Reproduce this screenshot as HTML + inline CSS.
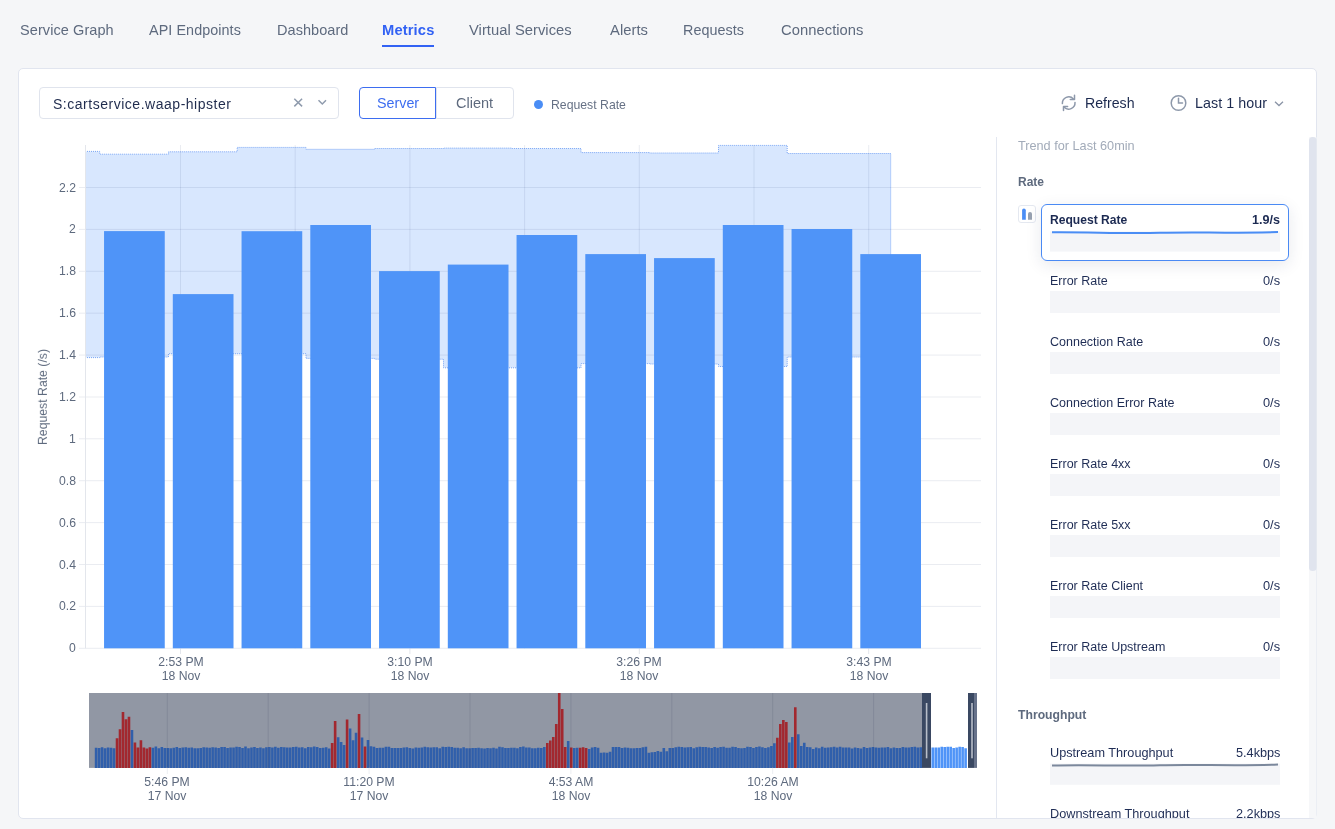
<!DOCTYPE html>
<html><head><meta charset="utf-8"><style>
html,body{margin:0;padding:0}
body{width:1335px;height:829px;overflow:hidden;position:relative;background:#f5f6f8;font-family:"Liberation Sans", sans-serif}
.t{position:absolute;white-space:nowrap;line-height:1;will-change:transform}
.abs{position:absolute;box-sizing:border-box}
svg{position:absolute;left:0;top:0}
</style></head><body>
<div class="t" style="left:19.7px;top:22.83px;font-size:14.5px;color:#5e6a7e;font-weight:400;letter-spacing:0.08px;">Service Graph</div>
<div class="t" style="left:149.4px;top:22.95px;font-size:14.35px;color:#5e6a7e;font-weight:400;letter-spacing:0.08px;">API Endpoints</div>
<div class="t" style="left:276.6px;top:22.83px;font-size:14.5px;color:#5e6a7e;font-weight:400;letter-spacing:0.05px;">Dashboard</div>
<div class="t" style="left:469.4px;top:22.61px;font-size:14.75px;color:#5e6a7e;font-weight:400;letter-spacing:0.03px;">Virtual Services</div>
<div class="t" style="left:609.6px;top:22.61px;font-size:14.75px;color:#5e6a7e;font-weight:400;letter-spacing:0.05px;">Alerts</div>
<div class="t" style="left:683.4px;top:22.95px;font-size:14.35px;color:#5e6a7e;font-weight:400;letter-spacing:0.05px;">Requests</div>
<div class="t" style="left:780.5px;top:22.61px;font-size:14.75px;color:#5e6a7e;font-weight:400;letter-spacing:0.05px;">Connections</div>
<div class="t" style="left:382.0px;top:22.66px;font-size:14.7px;color:#3262f4;font-weight:700;letter-spacing:0.15px;">Metrics</div>
<div class="abs" style="left:382px;top:45px;width:52px;height:2px;background:#3262f4"></div>
<div class="abs" style="left:18px;top:68px;width:1299px;height:751px;background:#fff;border:1px solid #e1e5ef;border-radius:5px"></div>
<div class="abs" style="left:39px;top:87px;width:300px;height:32px;border:1px solid #e0e4ed;border-radius:4px;background:#fff"></div>
<div class="t" style="left:52.5px;top:97.15px;font-size:14px;color:#1f2b4d;font-weight:400;letter-spacing:0.52px;">S:cartservice.waap-hipster</div>
<div class="abs" style="left:436px;top:87px;width:77.5px;height:32px;border:1px solid #e0e4ed;border-radius:0 4px 4px 0;background:#fff"></div>
<div class="abs" style="left:359px;top:87px;width:77px;height:32px;border:1.5px solid #3d6df0;border-radius:4px 0 0 4px;background:#fff"></div>
<div class="t" style="left:376.7px;top:96.10px;font-size:14.3px;color:#3d6df0;font-weight:400;letter-spacing:0px;">Server</div>
<div class="t" style="left:455.8px;top:95.93px;font-size:14.5px;color:#5e6a7e;font-weight:400;letter-spacing:0px;">Client</div>
<div class="abs" style="left:534px;top:100px;width:9px;height:9px;border-radius:50%;background:#4a8df5"></div>
<div class="t" style="left:551px;top:98.93px;font-size:12.25px;color:#667185;font-weight:400;letter-spacing:0px;">Request Rate</div>
<div class="t" style="left:1084.9px;top:96.42px;font-size:14.15px;color:#1c2a4f;font-weight:400;letter-spacing:0px;">Refresh</div>
<div class="t" style="left:1194.6px;top:96.30px;font-size:14.3px;color:#1c2a4f;font-weight:400;letter-spacing:0.06px;">Last 1 hour</div>
<svg width="1335" height="829" viewBox="0 0 1335 829">
<path d="M294.3 98.8 L302.1 106.4 M302.1 98.8 L294.3 106.4" stroke="#8f9bad" stroke-width="1.5" fill="none"/>
<path d="M318.5 100.3 L322.3 104 L326 100.3" stroke="#8f9bad" stroke-width="1.5" fill="none"/>
<g stroke="#8d98aa" stroke-width="1.5" fill="none" stroke-linecap="round" stroke-linejoin="round"><path d="M1062.4 103.6 A6.3 6.3 0 0 1 1073.4 99"/><path d="M1074.5 95.3 V99.5 H1070.3"/><path d="M1075 102.4 A6.3 6.3 0 0 1 1064 107"/><path d="M1063.5 110.6 V106.4 H1067.6"/></g>
<g stroke="#8d98aa" stroke-width="1.5" fill="none" stroke-linecap="round"><circle cx="1178.5" cy="103" r="7.3"/><path d="M1178.5 98.3 L1178.5 103 L1182.5 103"/></g>
<path d="M1275 101.8 L1279 105.5 L1283 101.8" stroke="#8a94a6" stroke-width="1.3" fill="none"/>
<path d="M85 151.4 L85 151.4 L99.7 151.4 L99.7 154.2 L168.5 154.2 L168.5 151.8 L237.2 151.8 L237.2 147.4 L306 147.4 L306 149.3 L374.7 149.3 L374.7 148.5 L443.5 148.5 L443.5 148.1 L512.2 148.1 L512.2 148.5 L581 148.5 L581 152.6 L649.7 152.6 L649.7 153 L718.5 153 L718.5 145.4 L787.2 145.4 L787.2 153.5 L890.7 153.5 L890.7 357 L787.2 357 L787.2 366.5 L718.5 366.5 L718.5 364 L649.7 364 L649.7 363.6 L581 363.6 L581 367.8 L512.2 367.8 L512.2 367.8 L443.5 367.8 L443.5 359.2 L374.7 359.2 L374.7 358.4 L306 358.4 L306 353.7 L237.2 353.7 L237.2 353.7 L168.5 353.7 L168.5 357 L99.7 357 L99.7 357.6 L85 357.6Z" fill="#d8e7fe"/>
<path d="M85 151.4 L85 151.4 L99.7 151.4 L99.7 154.2 L168.5 154.2 L168.5 151.8 L237.2 151.8 L237.2 147.4 L306 147.4 L306 149.3 L374.7 149.3 L374.7 148.5 L443.5 148.5 L443.5 148.1 L512.2 148.1 L512.2 148.5 L581 148.5 L581 152.6 L649.7 152.6 L649.7 153 L718.5 153 L718.5 145.4 L787.2 145.4 L787.2 153.5 L890.7 153.5 L890.7 357" fill="none" stroke="#7aa6f5" stroke-width="1" stroke-dasharray="1 1"/>
<path d="M85 357.6 L85 357.6 L99.7 357.6 L99.7 357 L168.5 357 L168.5 353.7 L237.2 353.7 L237.2 353.7 L306 353.7 L306 358.4 L374.7 358.4 L374.7 359.2 L443.5 359.2 L443.5 367.8 L512.2 367.8 L512.2 367.8 L581 367.8 L581 363.6 L649.7 363.6 L649.7 364 L718.5 364 L718.5 366.5 L787.2 366.5 L787.2 357 L890.7 357" fill="none" stroke="#7aa6f5" stroke-width="1" stroke-dasharray="1 1"/>
<path d="M79 648.3 L981 648.3 M79 606.4 L981 606.4 M79 564.5 L981 564.5 M79 522.6 L981 522.6 M79 480.7 L981 480.7 M79 438.8 L981 438.8 M79 397.0 L981 397.0 M79 355.1 L981 355.1 M79 313.2 L981 313.2 M79 271.3 L981 271.3 M79 229.4 L981 229.4 M79 187.5 L981 187.5 M180.5 145 L180.5 648.3 M295.2 145 L295.2 648.3 M409.9 145 L409.9 648.3 M524.6 145 L524.6 648.3 M639.3 145 L639.3 648.3 M754.0 145 L754.0 648.3 M868.7 145 L868.7 648.3" stroke="rgba(20,40,100,0.09)" stroke-width="1" fill="none"/>
<path d="M85.5 145 L85.5 648.3" stroke="#e3e6ec" stroke-width="1"/>
<path d="M180.5 648.3 L180.5 654 M409.9 648.3 L409.9 654 M639.3 648.3 L639.3 654 M868.7 648.3 L868.7 654" stroke="#e3e6ec" stroke-width="1"/>
<rect x="104.05" y="231.1" width="60.7" height="417.20" fill="#4f94f8"/>
<rect x="172.80" y="294.1" width="60.7" height="354.20" fill="#4f94f8"/>
<rect x="241.55" y="231.2" width="60.7" height="417.10" fill="#4f94f8"/>
<rect x="310.30" y="225" width="60.7" height="423.30" fill="#4f94f8"/>
<rect x="379.05" y="271.1" width="60.7" height="377.20" fill="#4f94f8"/>
<rect x="447.80" y="264.6" width="60.7" height="383.70" fill="#4f94f8"/>
<rect x="516.55" y="235" width="60.7" height="413.30" fill="#4f94f8"/>
<rect x="585.30" y="254.1" width="60.7" height="394.20" fill="#4f94f8"/>
<rect x="654.05" y="258.1" width="60.7" height="390.20" fill="#4f94f8"/>
<rect x="722.80" y="225" width="60.7" height="423.30" fill="#4f94f8"/>
<rect x="791.55" y="229" width="60.7" height="419.30" fill="#4f94f8"/>
<rect x="860.30" y="254.1" width="60.7" height="394.20" fill="#4f94f8"/>
<rect x="89" y="693" width="833" height="74.89999999999998" fill="#9197a4"/>
<path d="M94.80 747.8h2.6V767.9h-2.6ZM97.79 748.1h2.6V767.9h-2.6ZM100.78 747.2h2.6V767.9h-2.6ZM103.76 748.3h2.6V767.9h-2.6ZM106.75 747.4h2.6V767.9h-2.6ZM109.74 747.7h2.6V767.9h-2.6ZM112.73 748.3h2.6V767.9h-2.6ZM130.66 730.1h2.6V767.9h-2.6ZM151.57 747.7h2.6V767.9h-2.6ZM154.56 746.6h2.6V767.9h-2.6ZM157.55 748.3h2.6V767.9h-2.6ZM160.54 746.9h2.6V767.9h-2.6ZM163.52 747.9h2.6V767.9h-2.6ZM166.51 748.1h2.6V767.9h-2.6ZM169.50 748.2h2.6V767.9h-2.6ZM172.49 747.8h2.6V767.9h-2.6ZM175.48 746.9h2.6V767.9h-2.6ZM178.46 748.1h2.6V767.9h-2.6ZM181.45 747.4h2.6V767.9h-2.6ZM184.44 747.2h2.6V767.9h-2.6ZM187.43 747.7h2.6V767.9h-2.6ZM190.42 747.4h2.6V767.9h-2.6ZM193.40 748.3h2.6V767.9h-2.6ZM196.39 748.3h2.6V767.9h-2.6ZM199.38 748.0h2.6V767.9h-2.6ZM202.37 747.2h2.6V767.9h-2.6ZM205.36 747.6h2.6V767.9h-2.6ZM208.34 747.8h2.6V767.9h-2.6ZM211.33 747.3h2.6V767.9h-2.6ZM214.32 747.6h2.6V767.9h-2.6ZM217.31 747.9h2.6V767.9h-2.6ZM220.30 747.0h2.6V767.9h-2.6ZM223.28 747.1h2.6V767.9h-2.6ZM226.27 748.0h2.6V767.9h-2.6ZM229.26 747.4h2.6V767.9h-2.6ZM232.25 747.5h2.6V767.9h-2.6ZM235.24 746.8h2.6V767.9h-2.6ZM238.22 747.1h2.6V767.9h-2.6ZM241.21 747.9h2.6V767.9h-2.6ZM244.20 746.6h2.6V767.9h-2.6ZM247.19 748.2h2.6V767.9h-2.6ZM250.18 747.6h2.6V767.9h-2.6ZM253.16 747.0h2.6V767.9h-2.6ZM256.15 748.1h2.6V767.9h-2.6ZM259.14 747.5h2.6V767.9h-2.6ZM262.13 748.3h2.6V767.9h-2.6ZM265.12 747.2h2.6V767.9h-2.6ZM268.10 747.0h2.6V767.9h-2.6ZM271.09 747.4h2.6V767.9h-2.6ZM274.08 746.8h2.6V767.9h-2.6ZM277.07 747.8h2.6V767.9h-2.6ZM280.06 747.1h2.6V767.9h-2.6ZM283.04 747.3h2.6V767.9h-2.6ZM286.03 747.4h2.6V767.9h-2.6ZM289.02 747.6h2.6V767.9h-2.6ZM292.01 746.9h2.6V767.9h-2.6ZM295.00 746.7h2.6V767.9h-2.6ZM297.98 747.5h2.6V767.9h-2.6ZM300.97 747.2h2.6V767.9h-2.6ZM303.96 748.3h2.6V767.9h-2.6ZM306.95 747.1h2.6V767.9h-2.6ZM309.94 747.2h2.6V767.9h-2.6ZM312.92 746.6h2.6V767.9h-2.6ZM315.91 746.9h2.6V767.9h-2.6ZM318.90 747.9h2.6V767.9h-2.6ZM321.89 747.7h2.6V767.9h-2.6ZM324.88 747.2h2.6V767.9h-2.6ZM327.86 748.4h2.6V767.9h-2.6ZM336.83 737.2h2.6V767.9h-2.6ZM339.82 742.1h2.6V767.9h-2.6ZM342.80 745.1h2.6V767.9h-2.6ZM348.78 728.5h2.6V767.9h-2.6ZM351.77 740.2h2.6V767.9h-2.6ZM354.76 732.7h2.6V767.9h-2.6ZM360.73 737.6h2.6V767.9h-2.6ZM366.71 739.9h2.6V767.9h-2.6ZM369.70 746.2h2.6V767.9h-2.6ZM372.68 746.8h2.6V767.9h-2.6ZM375.67 747.9h2.6V767.9h-2.6ZM378.66 747.7h2.6V767.9h-2.6ZM381.65 747.8h2.6V767.9h-2.6ZM384.64 746.8h2.6V767.9h-2.6ZM387.62 746.7h2.6V767.9h-2.6ZM390.61 748.1h2.6V767.9h-2.6ZM393.60 748.1h2.6V767.9h-2.6ZM396.59 748.0h2.6V767.9h-2.6ZM399.58 748.0h2.6V767.9h-2.6ZM402.56 747.5h2.6V767.9h-2.6ZM405.55 747.3h2.6V767.9h-2.6ZM408.54 747.9h2.6V767.9h-2.6ZM411.53 748.4h2.6V767.9h-2.6ZM414.52 747.6h2.6V767.9h-2.6ZM417.50 747.7h2.6V767.9h-2.6ZM420.49 747.4h2.6V767.9h-2.6ZM423.48 746.7h2.6V767.9h-2.6ZM426.47 747.2h2.6V767.9h-2.6ZM429.46 747.5h2.6V767.9h-2.6ZM432.44 747.3h2.6V767.9h-2.6ZM435.43 747.2h2.6V767.9h-2.6ZM438.42 748.3h2.6V767.9h-2.6ZM441.41 746.8h2.6V767.9h-2.6ZM444.40 747.0h2.6V767.9h-2.6ZM447.38 746.8h2.6V767.9h-2.6ZM450.37 747.0h2.6V767.9h-2.6ZM453.36 747.7h2.6V767.9h-2.6ZM456.35 747.7h2.6V767.9h-2.6ZM459.34 748.2h2.6V767.9h-2.6ZM462.32 747.3h2.6V767.9h-2.6ZM465.31 748.3h2.6V767.9h-2.6ZM468.30 748.3h2.6V767.9h-2.6ZM471.29 748.0h2.6V767.9h-2.6ZM474.28 748.1h2.6V767.9h-2.6ZM477.26 747.8h2.6V767.9h-2.6ZM480.25 748.3h2.6V767.9h-2.6ZM483.24 748.4h2.6V767.9h-2.6ZM486.23 748.1h2.6V767.9h-2.6ZM489.22 748.2h2.6V767.9h-2.6ZM492.20 747.7h2.6V767.9h-2.6ZM495.19 748.4h2.6V767.9h-2.6ZM498.18 746.8h2.6V767.9h-2.6ZM501.17 747.3h2.6V767.9h-2.6ZM504.16 748.1h2.6V767.9h-2.6ZM507.14 747.9h2.6V767.9h-2.6ZM510.13 747.8h2.6V767.9h-2.6ZM513.12 747.7h2.6V767.9h-2.6ZM516.11 748.2h2.6V767.9h-2.6ZM519.10 746.9h2.6V767.9h-2.6ZM522.08 746.6h2.6V767.9h-2.6ZM525.07 747.6h2.6V767.9h-2.6ZM528.06 747.5h2.6V767.9h-2.6ZM531.05 748.2h2.6V767.9h-2.6ZM534.04 748.2h2.6V767.9h-2.6ZM537.02 747.8h2.6V767.9h-2.6ZM540.01 747.9h2.6V767.9h-2.6ZM543.00 747.0h2.6V767.9h-2.6ZM566.90 741.0h2.6V767.9h-2.6ZM572.88 747.9h2.6V767.9h-2.6ZM575.87 747.7h2.6V767.9h-2.6ZM587.82 749.0h2.6V767.9h-2.6ZM590.81 747.4h2.6V767.9h-2.6ZM593.80 747.0h2.6V767.9h-2.6ZM596.78 747.8h2.6V767.9h-2.6ZM599.77 752.8h2.6V767.9h-2.6ZM602.76 752.5h2.6V767.9h-2.6ZM605.75 752.8h2.6V767.9h-2.6ZM608.74 751.7h2.6V767.9h-2.6ZM611.72 746.9h2.6V767.9h-2.6ZM614.71 746.9h2.6V767.9h-2.6ZM617.70 747.1h2.6V767.9h-2.6ZM620.69 748.0h2.6V767.9h-2.6ZM623.68 747.5h2.6V767.9h-2.6ZM626.66 747.8h2.6V767.9h-2.6ZM629.65 748.3h2.6V767.9h-2.6ZM632.64 748.3h2.6V767.9h-2.6ZM635.63 747.9h2.6V767.9h-2.6ZM638.62 747.9h2.6V767.9h-2.6ZM641.60 747.2h2.6V767.9h-2.6ZM644.59 746.7h2.6V767.9h-2.6ZM647.58 752.8h2.6V767.9h-2.6ZM650.57 752.2h2.6V767.9h-2.6ZM653.56 752.1h2.6V767.9h-2.6ZM656.54 751.0h2.6V767.9h-2.6ZM659.53 751.7h2.6V767.9h-2.6ZM662.52 748.0h2.6V767.9h-2.6ZM665.51 751.2h2.6V767.9h-2.6ZM668.50 748.0h2.6V767.9h-2.6ZM671.48 748.0h2.6V767.9h-2.6ZM674.47 747.3h2.6V767.9h-2.6ZM677.46 746.8h2.6V767.9h-2.6ZM680.45 746.9h2.6V767.9h-2.6ZM683.44 747.5h2.6V767.9h-2.6ZM686.42 747.2h2.6V767.9h-2.6ZM689.41 747.0h2.6V767.9h-2.6ZM692.40 748.2h2.6V767.9h-2.6ZM695.39 747.2h2.6V767.9h-2.6ZM698.38 746.8h2.6V767.9h-2.6ZM701.36 747.0h2.6V767.9h-2.6ZM704.35 747.0h2.6V767.9h-2.6ZM707.34 747.5h2.6V767.9h-2.6ZM710.33 748.1h2.6V767.9h-2.6ZM713.32 747.0h2.6V767.9h-2.6ZM716.30 747.8h2.6V767.9h-2.6ZM719.29 747.0h2.6V767.9h-2.6ZM722.28 746.7h2.6V767.9h-2.6ZM725.27 747.7h2.6V767.9h-2.6ZM728.26 747.7h2.6V767.9h-2.6ZM731.24 746.7h2.6V767.9h-2.6ZM734.23 747.1h2.6V767.9h-2.6ZM737.22 748.1h2.6V767.9h-2.6ZM740.21 748.2h2.6V767.9h-2.6ZM743.20 748.1h2.6V767.9h-2.6ZM746.18 746.8h2.6V767.9h-2.6ZM749.17 746.9h2.6V767.9h-2.6ZM752.16 748.1h2.6V767.9h-2.6ZM755.15 746.9h2.6V767.9h-2.6ZM758.14 746.6h2.6V767.9h-2.6ZM761.12 747.2h2.6V767.9h-2.6ZM764.11 747.9h2.6V767.9h-2.6ZM767.10 747.3h2.6V767.9h-2.6ZM770.09 746.0h2.6V767.9h-2.6ZM773.08 743.2h2.6V767.9h-2.6ZM788.02 742.4h2.6V767.9h-2.6ZM791.00 736.9h2.6V767.9h-2.6ZM796.98 734.2h2.6V767.9h-2.6ZM799.97 746.0h2.6V767.9h-2.6ZM802.96 742.8h2.6V767.9h-2.6ZM805.94 747.0h2.6V767.9h-2.6ZM808.93 747.3h2.6V767.9h-2.6ZM811.92 749.0h2.6V767.9h-2.6ZM814.91 747.6h2.6V767.9h-2.6ZM817.90 748.2h2.6V767.9h-2.6ZM820.88 746.8h2.6V767.9h-2.6ZM823.87 747.8h2.6V767.9h-2.6ZM826.86 747.6h2.6V767.9h-2.6ZM829.85 747.3h2.6V767.9h-2.6ZM832.84 746.8h2.6V767.9h-2.6ZM835.82 747.6h2.6V767.9h-2.6ZM838.81 746.7h2.6V767.9h-2.6ZM841.80 747.5h2.6V767.9h-2.6ZM844.79 747.4h2.6V767.9h-2.6ZM847.78 747.5h2.6V767.9h-2.6ZM850.76 748.4h2.6V767.9h-2.6ZM853.75 747.6h2.6V767.9h-2.6ZM856.74 748.1h2.6V767.9h-2.6ZM859.73 748.4h2.6V767.9h-2.6ZM862.72 747.0h2.6V767.9h-2.6ZM865.70 748.1h2.6V767.9h-2.6ZM868.69 747.5h2.6V767.9h-2.6ZM871.68 747.1h2.6V767.9h-2.6ZM874.67 747.4h2.6V767.9h-2.6ZM877.66 747.8h2.6V767.9h-2.6ZM880.64 747.5h2.6V767.9h-2.6ZM883.63 747.4h2.6V767.9h-2.6ZM886.62 747.0h2.6V767.9h-2.6ZM889.61 748.2h2.6V767.9h-2.6ZM892.60 747.4h2.6V767.9h-2.6ZM895.58 748.0h2.6V767.9h-2.6ZM898.57 747.9h2.6V767.9h-2.6ZM901.56 747.0h2.6V767.9h-2.6ZM904.55 747.5h2.6V767.9h-2.6ZM907.54 747.4h2.6V767.9h-2.6ZM910.52 747.0h2.6V767.9h-2.6ZM913.51 746.8h2.6V767.9h-2.6ZM916.50 747.6h2.6V767.9h-2.6ZM919.49 747.3h2.6V767.9h-2.6Z" fill="#305fab"/>
<path d="M115.72 738.2h2.6V767.9h-2.6ZM118.70 729.3h2.6V767.9h-2.6ZM121.69 712.0h2.6V767.9h-2.6ZM124.68 719.2h2.6V767.9h-2.6ZM127.67 716.7h2.6V767.9h-2.6ZM133.64 742.4h2.6V767.9h-2.6ZM136.63 747.4h2.6V767.9h-2.6ZM139.62 740.2h2.6V767.9h-2.6ZM142.61 747.4h2.6V767.9h-2.6ZM145.60 748.4h2.6V767.9h-2.6ZM148.58 747.2h2.6V767.9h-2.6ZM330.85 742.9h2.6V767.9h-2.6ZM333.84 721.0h2.6V767.9h-2.6ZM345.79 719.5h2.6V767.9h-2.6ZM357.74 714.0h2.6V767.9h-2.6ZM363.72 746.6h2.6V767.9h-2.6ZM545.99 742.9h2.6V767.9h-2.6ZM548.98 740.5h2.6V767.9h-2.6ZM551.96 737.1h2.6V767.9h-2.6ZM554.95 724.0h2.6V767.9h-2.6ZM557.94 693.1h2.6V767.9h-2.6ZM560.93 709.0h2.6V767.9h-2.6ZM563.92 747.0h2.6V767.9h-2.6ZM569.89 747.6h2.6V767.9h-2.6ZM578.86 747.7h2.6V767.9h-2.6ZM581.84 747.2h2.6V767.9h-2.6ZM584.83 747.9h2.6V767.9h-2.6ZM776.06 737.8h2.6V767.9h-2.6ZM779.05 724.1h2.6V767.9h-2.6ZM782.04 720.0h2.6V767.9h-2.6ZM785.03 722.1h2.6V767.9h-2.6ZM793.99 707.2h2.6V767.9h-2.6Z" fill="#a2282f"/>
<path d="M931.44 747.6h2.6V767.9h-2.6ZM934.43 747.4h2.6V767.9h-2.6ZM937.42 747.5h2.6V767.9h-2.6ZM940.40 746.7h2.6V767.9h-2.6ZM943.39 747.1h2.6V767.9h-2.6ZM946.38 746.8h2.6V767.9h-2.6ZM949.37 746.7h2.6V767.9h-2.6ZM952.36 747.9h2.6V767.9h-2.6ZM955.34 747.4h2.6V767.9h-2.6ZM958.33 746.7h2.6V767.9h-2.6ZM961.32 746.9h2.6V767.9h-2.6ZM964.31 748.2h2.6V767.9h-2.6Z" fill="#4f94f8"/>
<path d="M167.3 693 L167.3 767.9 M268.2 693 L268.2 767.9 M369.1 693 L369.1 767.9 M470.0 693 L470.0 767.9 M570.9 693 L570.9 767.9 M671.8 693 L671.8 767.9 M772.7 693 L772.7 767.9 M873.6 693 L873.6 767.9" stroke="rgba(30,40,70,0.12)" stroke-width="1"/>
<path d="M167.3 767.9 L167.3 774 M369.1 767.9 L369.1 774 M570.9 767.9 L570.9 774 M772.7 767.9 L772.7 774" stroke="#eceef2" stroke-width="1"/>
<rect x="922" y="693" width="9" height="74.89999999999998" fill="#3a4862"/>
<rect x="925.8" y="703" width="1.6" height="55.3" fill="#b8bec9"/>
<rect x="968" y="693" width="6" height="74.89999999999998" fill="#3a4862"/>
<rect x="974" y="693" width="3" height="74.89999999999998" fill="#67728a"/>
<rect x="971.2" y="703" width="1.6" height="55.3" fill="#b8bec9"/>
<path d="M996.5 137 L996.5 818" stroke="#e3e7f0" stroke-width="1"/>
<rect x="1309" y="137" width="7.5" height="681" fill="#f6f7f9"/>
<rect x="1309" y="137" width="7.5" height="434" rx="3.5" fill="#e0e4ee"/>
<rect x="1050" y="231.4" width="230" height="20.2" fill="#f4f5f8"/>
<rect x="1050" y="291" width="230" height="22" fill="#f4f5f8"/>
<rect x="1050" y="352" width="230" height="22" fill="#f4f5f8"/>
<rect x="1050" y="413" width="230" height="22" fill="#f4f5f8"/>
<rect x="1050" y="474" width="230" height="22" fill="#f4f5f8"/>
<rect x="1050" y="535" width="230" height="22" fill="#f4f5f8"/>
<rect x="1050" y="596" width="230" height="22" fill="#f4f5f8"/>
<rect x="1050" y="657" width="230" height="22" fill="#f4f5f8"/>
<rect x="1050" y="763.6" width="230" height="21.2" fill="#f4f5f8"/>
<path d="M1052 232.3 C1090 232, 1120 233.6, 1160 232.8 S1230 233.4, 1278 232" stroke="#4a8df5" stroke-width="2" fill="none"/>
<path d="M1052 765.5 C1090 764.6, 1120 766.2, 1160 765.2 S1230 766.3, 1278 764.6" stroke="#7b889c" stroke-width="2" fill="none"/>
<rect x="1018.5" y="205.5" width="17" height="17" rx="2.5" fill="#fff" stroke="#e4e8f0" stroke-width="1"/>
<path d="M1022.1 219.7 V210.3 A1.85 1.85 0 0 1 1025.8 210.3 V219.7 Z" fill="#4a8df5"/>
<path d="M1028 219.7 V214 A2 2 0 0 1 1032 214 V219.7 Z" fill="#97a1b1"/>
</svg><div class="abs" style="left:1041px;top:204px;width:248px;height:57px;border:1.5px solid #4a8af4;border-radius:6px;box-shadow:0 4px 16px rgba(30,40,80,0.10)"></div>
<div class="t" style="right:1259px;top:642.37px;font-size:12.2px;color:#5e6a7e;font-weight:400;letter-spacing:0px;">0</div>
<div class="t" style="right:1259px;top:600.48px;font-size:12.2px;color:#5e6a7e;font-weight:400;letter-spacing:0px;">0.2</div>
<div class="t" style="right:1259px;top:558.59px;font-size:12.2px;color:#5e6a7e;font-weight:400;letter-spacing:0px;">0.4</div>
<div class="t" style="right:1259px;top:516.70px;font-size:12.2px;color:#5e6a7e;font-weight:400;letter-spacing:0px;">0.6</div>
<div class="t" style="right:1259px;top:474.81px;font-size:12.2px;color:#5e6a7e;font-weight:400;letter-spacing:0px;">0.8</div>
<div class="t" style="right:1259px;top:432.92px;font-size:12.2px;color:#5e6a7e;font-weight:400;letter-spacing:0px;">1</div>
<div class="t" style="right:1259px;top:391.03px;font-size:12.2px;color:#5e6a7e;font-weight:400;letter-spacing:0px;">1.2</div>
<div class="t" style="right:1259px;top:349.14px;font-size:12.2px;color:#5e6a7e;font-weight:400;letter-spacing:0px;">1.4</div>
<div class="t" style="right:1259px;top:307.25px;font-size:12.2px;color:#5e6a7e;font-weight:400;letter-spacing:0px;">1.6</div>
<div class="t" style="right:1259px;top:265.36px;font-size:12.2px;color:#5e6a7e;font-weight:400;letter-spacing:0px;">1.8</div>
<div class="t" style="right:1259px;top:223.47px;font-size:12.2px;color:#5e6a7e;font-weight:400;letter-spacing:0px;">2</div>
<div class="t" style="right:1259px;top:181.58px;font-size:12.2px;color:#5e6a7e;font-weight:400;letter-spacing:0px;">2.2</div>
<div class="t" style="left:80.5px;width:200px;text-align:center;top:655.67px;font-size:12.2px;color:#5e6a7e;font-weight:400;letter-spacing:0px">2:53 PM</div>
<div class="t" style="left:80.5px;width:200px;text-align:center;top:669.67px;font-size:12.2px;color:#5e6a7e;font-weight:400;letter-spacing:0px">18 Nov</div>
<div class="t" style="left:309.9px;width:200px;text-align:center;top:655.67px;font-size:12.2px;color:#5e6a7e;font-weight:400;letter-spacing:0px">3:10 PM</div>
<div class="t" style="left:309.9px;width:200px;text-align:center;top:669.67px;font-size:12.2px;color:#5e6a7e;font-weight:400;letter-spacing:0px">18 Nov</div>
<div class="t" style="left:539.3px;width:200px;text-align:center;top:655.67px;font-size:12.2px;color:#5e6a7e;font-weight:400;letter-spacing:0px">3:26 PM</div>
<div class="t" style="left:539.3px;width:200px;text-align:center;top:669.67px;font-size:12.2px;color:#5e6a7e;font-weight:400;letter-spacing:0px">18 Nov</div>
<div class="t" style="left:768.7px;width:200px;text-align:center;top:655.67px;font-size:12.2px;color:#5e6a7e;font-weight:400;letter-spacing:0px">3:43 PM</div>
<div class="t" style="left:768.7px;width:200px;text-align:center;top:669.67px;font-size:12.2px;color:#5e6a7e;font-weight:400;letter-spacing:0px">18 Nov</div>
<div class="t" style="left:67.30000000000001px;width:200px;text-align:center;top:775.67px;font-size:12.2px;color:#5e6a7e;font-weight:400;letter-spacing:0px">5:46 PM</div>
<div class="t" style="left:67.30000000000001px;width:200px;text-align:center;top:789.67px;font-size:12.2px;color:#5e6a7e;font-weight:400;letter-spacing:0px">17 Nov</div>
<div class="t" style="left:269.1px;width:200px;text-align:center;top:775.67px;font-size:12.2px;color:#5e6a7e;font-weight:400;letter-spacing:0px">11:20 PM</div>
<div class="t" style="left:269.1px;width:200px;text-align:center;top:789.67px;font-size:12.2px;color:#5e6a7e;font-weight:400;letter-spacing:0px">17 Nov</div>
<div class="t" style="left:470.9000000000001px;width:200px;text-align:center;top:775.67px;font-size:12.2px;color:#5e6a7e;font-weight:400;letter-spacing:0px">4:53 AM</div>
<div class="t" style="left:470.9000000000001px;width:200px;text-align:center;top:789.67px;font-size:12.2px;color:#5e6a7e;font-weight:400;letter-spacing:0px">18 Nov</div>
<div class="t" style="left:672.7px;width:200px;text-align:center;top:775.67px;font-size:12.2px;color:#5e6a7e;font-weight:400;letter-spacing:0px">10:26 AM</div>
<div class="t" style="left:672.7px;width:200px;text-align:center;top:789.67px;font-size:12.2px;color:#5e6a7e;font-weight:400;letter-spacing:0px">18 Nov</div>
<div class="t" style="left:42.7px;top:396.7px;font-size:12.25px;color:#5e6a7e;transform:translate(-50%,-50%) rotate(-90deg)">Request Rate (/s)</div>
<div class="t" style="left:1017.9px;top:139.55px;font-size:12.7px;color:#a2abb9;font-weight:400;letter-spacing:0px;">Trend for Last 60min</div>
<div class="t" style="left:1017.9px;top:175.54px;font-size:12px;color:#5e6a7e;font-weight:700;letter-spacing:0px;">Rate</div>
<div class="t" style="left:1050.3px;top:213.56px;font-size:12.1px;color:#1c2a52;font-weight:700;letter-spacing:0px;">Request Rate</div>
<div class="t" style="right:55px;top:214.03px;font-size:12.6px;color:#1c2a52;font-weight:700;letter-spacing:0px;">1.9/s</div>
<div class="t" style="left:1050.3px;top:274.52px;font-size:12.5px;color:#1f2d55;font-weight:400;letter-spacing:0px;">Error Rate</div>
<div class="t" style="right:55px;top:275.06px;font-size:12.8px;color:#1f2d55;font-weight:400;letter-spacing:0px;">0/s</div>
<div class="t" style="left:1050.3px;top:335.52px;font-size:12.5px;color:#1f2d55;font-weight:400;letter-spacing:0px;">Connection Rate</div>
<div class="t" style="right:55px;top:336.06px;font-size:12.8px;color:#1f2d55;font-weight:400;letter-spacing:0px;">0/s</div>
<div class="t" style="left:1050.3px;top:396.52px;font-size:12.5px;color:#1f2d55;font-weight:400;letter-spacing:0px;">Connection Error Rate</div>
<div class="t" style="right:55px;top:397.06px;font-size:12.8px;color:#1f2d55;font-weight:400;letter-spacing:0px;">0/s</div>
<div class="t" style="left:1050.3px;top:457.52px;font-size:12.5px;color:#1f2d55;font-weight:400;letter-spacing:0px;">Error Rate 4xx</div>
<div class="t" style="right:55px;top:458.06px;font-size:12.8px;color:#1f2d55;font-weight:400;letter-spacing:0px;">0/s</div>
<div class="t" style="left:1050.3px;top:518.52px;font-size:12.5px;color:#1f2d55;font-weight:400;letter-spacing:0px;">Error Rate 5xx</div>
<div class="t" style="right:55px;top:519.06px;font-size:12.8px;color:#1f2d55;font-weight:400;letter-spacing:0px;">0/s</div>
<div class="t" style="left:1050.3px;top:579.52px;font-size:12.5px;color:#1f2d55;font-weight:400;letter-spacing:0px;">Error Rate Client</div>
<div class="t" style="right:55px;top:580.06px;font-size:12.8px;color:#1f2d55;font-weight:400;letter-spacing:0px;">0/s</div>
<div class="t" style="left:1050.3px;top:640.52px;font-size:12.5px;color:#1f2d55;font-weight:400;letter-spacing:0px;">Error Rate Upstream</div>
<div class="t" style="right:55px;top:641.06px;font-size:12.8px;color:#1f2d55;font-weight:400;letter-spacing:0px;">0/s</div>
<div class="t" style="left:1017.6px;top:708.97px;font-size:12.2px;color:#5e6a7e;font-weight:700;letter-spacing:0px;">Throughput</div>
<div class="t" style="left:1050.3px;top:747.15px;font-size:12.7px;color:#1f2d55;font-weight:400;letter-spacing:0px;">Upstream Throughput</div>
<div class="t" style="right:55px;top:747.15px;font-size:12.7px;color:#1f2d55;font-weight:400;letter-spacing:0px;">5.4kbps</div>
<div class="abs" style="left:1000px;top:795px;width:300px;height:23px;overflow:hidden"><div class="t" style="left:50.3px;top:13.15px;font-size:12.7px;color:#1f2d55">Downstream Throughput</div><div class="t" style="right:20px;top:13.15px;font-size:12.7px;color:#1f2d55">2.2kbps</div></div>
</body></html>
